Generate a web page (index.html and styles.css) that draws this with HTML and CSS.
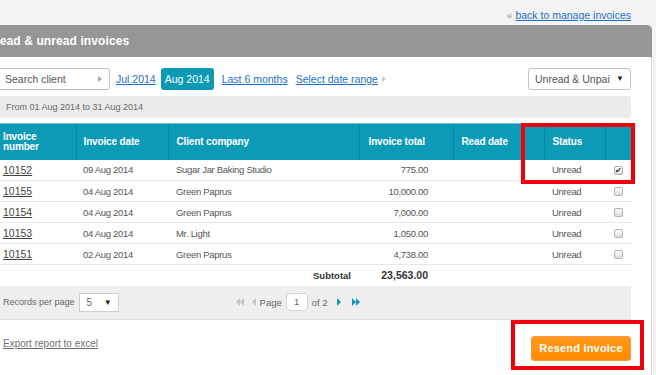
FILE: index.html
```html
<!DOCTYPE html>
<html>

<head>
    <meta charset="UTF-8">
    <title>Read &amp; unread invoices</title>
    <link rel="stylesheet" href="styles.css">
</head>

<body>
    <div class="top">
        <a class="back" href="#"><span class="raquo">&laquo;</span> <u>back to manage invoices</u></a>
    </div>

    <div class="panel">
        <div class="panel-head">Read &amp; unread invoices</div>
        <div class="panel-body">

            <div class="filters">
                <div class="search">Search client <span class="tri"></span></div>
                <a class="lnk jul" href="#">Jul 2014</a>
                <span class="month-on">Aug 2014</span>
                <a class="lnk" href="#">Last 6 months</a>
                <a class="lnk" href="#">Select date range</a><span class="tri tri-range"></span>
                <div class="status-select">Unread &amp; Unpai <span class="caret">&#9660;</span></div>
            </div>

            <div class="range">From 01 Aug 2014 to 31 Aug 2014</div>

            <table class="invoices">
                <colgroup>
                    <col style="width:81px">
                    <col style="width:92px">
                    <col style="width:191px">
                    <col style="width:94px">
                    <col style="width:91px">
                    <col style="width:61px">
                    <col style="width:26px">
                </colgroup>
                <thead>
                    <tr>
                        <th>Invoice<br>number</th>
                        <th>Invoice date</th>
                        <th>Client company</th>
                        <th>Invoice total</th>
                        <th>Read date</th>
                        <th>Status</th>
                        <th></th>
                    </tr>
                </thead>
                <tbody>
                    <tr>
                        <td><a href="#">10152</a></td>
                        <td>09 Aug 2014</td>
                        <td>Sugar Jar Baking Studio</td>
                        <td class="num">775.00</td>
                        <td></td>
                        <td>Unread</td>
                        <td class="chk"><span class="box on">&#10004;</span></td>
                    </tr>
                    <tr>
                        <td><a href="#">10155</a></td>
                        <td>04 Aug 2014</td>
                        <td>Green Paprus</td>
                        <td class="num">10,000.00</td>
                        <td></td>
                        <td>Unread</td>
                        <td class="chk"><span class="box"></span></td>
                    </tr>
                    <tr>
                        <td><a href="#">10154</a></td>
                        <td>04 Aug 2014</td>
                        <td>Green Paprus</td>
                        <td class="num">7,000.00</td>
                        <td></td>
                        <td>Unread</td>
                        <td class="chk"><span class="box"></span></td>
                    </tr>
                    <tr>
                        <td><a href="#">10153</a></td>
                        <td>04 Aug 2014</td>
                        <td>Mr. Light</td>
                        <td class="num">1,050.00</td>
                        <td></td>
                        <td>Unread</td>
                        <td class="chk"><span class="box"></span></td>
                    </tr>
                    <tr>
                        <td><a href="#">10151</a></td>
                        <td>02 Aug 2014</td>
                        <td>Green Paprus</td>
                        <td class="num">4,738.00</td>
                        <td></td>
                        <td>Unread</td>
                        <td class="chk"><span class="box"></span></td>
                    </tr>
                    <tr class="subtotal">
                        <td></td>
                        <td></td>
                        <td class="label">Subtotal</td>
                        <td class="num">23,563.00</td>
                        <td></td>
                        <td></td>
                        <td></td>
                    </tr>
                </tbody>
            </table>

            <div class="pager">
                <div class="per-page">
                    Records per page
                    <div class="per-select">5 <span class="caret">&#9660;</span></div>
                </div>
                <div class="pages">
                    <svg class="ico first" width="9" height="8" viewBox="0 0 9 8"><path d="M0 4 L4 0 V8 Z M4 4 L8 0 V8 Z" fill="#c4c4c4"/></svg>
                    <svg class="ico prev" width="5" height="8" viewBox="0 0 5 8"><path d="M0 4 L4 0 V8 Z" fill="#c4c4c4"/></svg>
                    <span>Page</span>
                    <span class="page-input">1</span>
                    <span>of 2</span>
                    <svg class="ico next" width="5" height="8" viewBox="0 0 5 8"><path d="M1 0 L5 4 L1 8 Z" fill="#1792b8"/></svg>
                    <svg class="ico last" width="10" height="8" viewBox="0 0 10 8"><path d="M1 0 L5 4 L1 8 Z M5 0 L9 4 L5 8 Z" fill="#1792b8"/></svg>
                </div>
            </div>

            <div class="actions">
                <a class="export" href="#">Export report to excel</a>
                <button class="resend">Resend invoice</button>
            </div>

        </div>
    </div>

    <div class="mark mark-status"></div>
    <div class="mark mark-resend"></div>
</body>

</html>
```

FILE: styles.css
```css
* {
    margin: 0;
    padding: 0;
    box-sizing: border-box;
}

body,
html {
    height: 100%;
    overflow: hidden;
}

body {
    background: #f3f3f3;
    font-family: "Liberation Sans", Arial, sans-serif;
    font-size: 11px;
    color: #444;
    position: relative;
}

a {
    color: #444;
}

.top {
    height: 25px;
    display: flex;
    justify-content: flex-end;
    align-items: center;
    padding: 4px 25px 0 0;
}

.back {
    font-size: 10.5px;
    color: #1e6fc5;
    text-decoration: none;
}

.back .raquo {
    color: #7a9fc8;
}

.panel {
    margin-left: -26px;
    width: 678px;
    height: 350px;
    display: flex;
    flex-direction: column;
}

.panel-head {
    height: 32px;
    line-height: 33px;
    padding-left: 17px;
    background: #969696;
    border-top-right-radius: 5px;
    color: #fff;
    font-size: 12px;
    font-weight: bold;
    letter-spacing: 0.1px;
}

.panel-body {
    flex: 1;
    background: #fff;
    border-right: 1px solid #dcdcdc;
    padding: 11px 20px 0 21px;
}

/* filter row */
.filters {
    display: flex;
    align-items: center;
    height: 22px;
    margin-bottom: 6px;
    font-size: 10.5px;
}

.search {
    width: 115px;
    height: 22px;
    line-height: 20px;
    border: 1px solid #bdbdbd;
    border-radius: 3px;
    padding-left: 9px;
    color: #555;
    position: relative;
}

.tri {
    display: inline-block;
    width: 0;
    height: 0;
    border-top: 3px solid transparent;
    border-bottom: 3px solid transparent;
    border-left: 4px solid #a9a9a9;
}

.search .tri {
    position: absolute;
    right: 7px;
    top: 7px;
}

.tri-range {
    margin-left: 4px;
    border-left-color: #c9c9c9;
}

.lnk {
    color: #1e6fc5;
    margin-left: 8px;
}

.jul {
    margin-left: 6px;
}

.month-on {
    margin-left: 5px;
    height: 22px;
    line-height: 22px;
    padding: 0 4px;
    background: #0b99b6;
    border-radius: 3px;
    color: #fff;
}

.status-select {
    margin-left: auto;
    width: 103px;
    height: 22px;
    line-height: 20px;
    border: 1px solid #c4c4c4;
    border-radius: 3px;
    padding-left: 6px;
    color: #555;
    position: relative;
}

.caret {
    font-size: 8px;
    color: #222;
}

.status-select .caret {
    position: absolute;
    right: 6px;
    top: 0;
}

.range {
    height: 22px;
    line-height: 22px;
    background: #ebebeb;
    border-radius: 3px;
    padding-left: 11px;
    font-size: 9px;
    color: #6a6a6a;
    margin-bottom: 5px;
}

/* table */
.invoices {
    width: 636px;
    table-layout: fixed;
    border-collapse: collapse;
}

.invoices th {
    background: #0c9ab6;
    border-top: 1px solid #6fc3d6;
    border-left: 1px solid #0a88a2;
    color: #fff;
    font-weight: bold;
    font-size: 10px;
    letter-spacing: -0.15px;
    line-height: 10px;
    text-align: left;
    padding: 0 0 0 8px;
    height: 36px;
}

.invoices th:first-child {
    border-left: none;
}

.invoices th:nth-child(2) {
    padding-left: 7px;
}

.invoices th:nth-child(4) {
    padding-left: 9px;
}

.invoices td {
    height: 21px;
    padding: 0 0 0 8px;
    border-bottom: 1px solid #e6e6e6;
    white-space: nowrap;
    color: #555;
    font-size: 9.5px;
    letter-spacing: -0.3px;
}

.invoices td:nth-child(2) {
    padding-left: 7px;
}

.invoices td a {
    color: #444;
    font-size: 10.5px;
    letter-spacing: 0;
}

.invoices td.num {
    text-align: right;
    padding-right: 25px;
}

.invoices td.chk {
    padding: 0;
    text-align: center;
}

.box {
    display: inline-block;
    width: 9px;
    height: 9px;
    border: 1px solid #b3b3b3;
    border-radius: 2px;
    background: linear-gradient(#fdfdfd, #dedede);
    font-size: 8px;
    line-height: 7px;
    letter-spacing: 0;
    color: #333;
    vertical-align: middle;
    text-align: center;
}

.subtotal td {
    border-bottom: none;
    font-weight: bold;
    color: #333;
    letter-spacing: 0;
}

.subtotal td.label {
    text-align: right;
    padding-right: 8px;
    font-size: 9.5px;
}

.subtotal td.num {
    font-size: 10.5px;
}

/* pager */
.pager {
    height: 34px;
    background: #efefef;
    border-bottom: 1px solid #dedede;
    display: flex;
    align-items: center;
    padding-left: 8px;
    font-size: 9px;
    color: #666;
}

.per-page {
    display: flex;
    align-items: center;
}

.per-select {
    margin-left: 4px;
    width: 40px;
    height: 19px;
    line-height: 17px;
    background: #fff;
    border: 1px solid #cfcfcf;
    padding-left: 7px;
    font-size: 10px;
    position: relative;
}

.per-select .caret {
    position: absolute;
    right: 6px;
    top: 0;
}

.pages {
    margin-left: 117px;
    display: flex;
    align-items: center;
    font-size: 9.5px;
}

.pages .first {
    margin-right: 7px;
}

.pages .prev {
    margin-right: 3px;
}

.page-input {
    margin: 0 4px 0 4px;
    width: 22px;
    height: 18px;
    line-height: 16px;
    text-align: center;
    background: #fff;
    border: 1px solid #d2d2d2;
    border-radius: 4px;
}

.pages .next {
    margin: 0 10px 0 8px;
}

/* actions */
.actions {
    display: flex;
    justify-content: space-between;
    align-items: flex-start;
    margin-top: 16px;
}

.export {
    margin: 1px 0 0 8px;
    color: #6f6f6f;
    font-size: 10px;
    line-height: 14px;
}

.resend {
    width: 100px;
    height: 25px;
    background: linear-gradient(#ff9b1c, #ff8a00);
    border: 1px solid #f59a3a;
    border-radius: 3px;
    color: #fff;
    font-family: "Liberation Sans", Arial, sans-serif;
    font-weight: bold;
    font-size: 11px;
    letter-spacing: 0.2px;
}

/* red annotation boxes */
.mark {
    position: absolute;
    border: 4px solid #f0000a;
}

.mark-status {
    left: 521px;
    top: 123px;
    width: 114px;
    height: 61px;
}

.mark-resend {
    left: 511px;
    top: 320px;
    width: 133px;
    height: 50px;
}
```
